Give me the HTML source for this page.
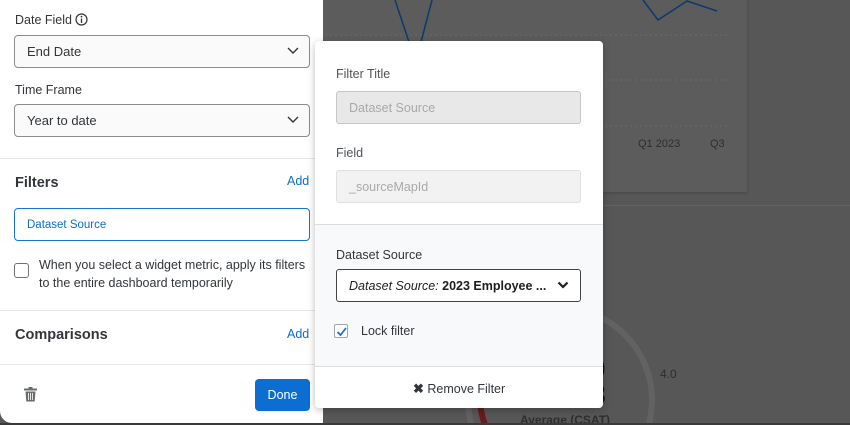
<!DOCTYPE html>
<html><head><style>
*{box-sizing:border-box;margin:0;padding:0}
html,body{width:850px;height:425px;overflow:hidden}
body{background:#575757;font-family:"Liberation Sans",sans-serif;position:relative;color:#32363a}
.a{position:absolute}
.sel{position:absolute;border:1px solid #8a8d90;border-radius:4px;background:#fafafa;font-size:13px;color:#32363a;padding-left:12px;display:flex;align-items:center}
.chev{position:absolute;right:10px;top:50%;margin-top:-5px}
.hr{position:absolute;height:1px;background:#e6e6e6}
.lbl{position:absolute;font-size:12.5px;color:#32363a}
</style></head><body>
<div class="a" style="left:323px;top:0;width:424px;height:192px;background:#5c5c5c;box-shadow:0 1px 3px rgba(0,0,0,.2)"></div>
<div class="a" style="left:323px;top:205px;width:527px;height:1px;background:#626262"></div>
<svg class="a" style="left:0;top:0" width="850" height="425">
<g stroke="#6a6a6a" stroke-dasharray="2 3"><line x1="325" y1="35" x2="730" y2="35"/><line x1="325" y1="80" x2="730" y2="80"/><line x1="325" y1="126" x2="730" y2="126"/></g>
<polyline points="395,0 409,42" fill="none" stroke="#0a3a6e" stroke-width="1.5"/>
<polyline points="432,0 421,42" fill="none" stroke="#0a3a6e" stroke-width="1.5"/>
<polyline points="643,0 658,20 687,1 717,11" fill="none" stroke="#0a3a6e" stroke-width="1.5"/>
<text x="638" y="147" font-size="11" fill="#2e2e2e" font-family="Liberation Sans">Q1 2023</text>
<text x="710" y="147" font-size="11" fill="#2e2e2e" font-family="Liberation Sans">Q3</text>
<circle cx="560" cy="400" r="92" fill="none" stroke="#626262" stroke-width="6"/>
<path d="M595 305 A92 92 0 0 0 485 425" fill="none" stroke="#6a1a1f" stroke-width="6"/>
<text x="590" y="378" font-size="28" font-weight="bold" fill="#111" font-family="Liberation Sans">0</text>
<text x="590" y="404" font-size="28" font-weight="bold" fill="#111" font-family="Liberation Sans">8</text>
<text x="660" y="378" font-size="12" fill="#2e2e2e" font-family="Liberation Sans">4.0</text>
<text x="520" y="424" font-size="12" font-weight="bold" fill="#2e2e2e" font-family="Liberation Sans">Average (CSAT)</text>
<rect x="0" y="423" width="850" height="2" fill="#3a3a3a"/>
</svg>

<div class="a" style="left:0;top:0;width:323px;height:423px;background:#fff;border-bottom-left-radius:12px"></div>
<div class="lbl" style="left:15px;top:13px">Date Field</div>
<svg class="a" style="left:75px;top:13px" width="13" height="13"><circle cx="6.5" cy="6.5" r="5.5" fill="none" stroke="#32363a" stroke-width="1.2"/><line x1="6.5" y1="5.5" x2="6.5" y2="10" stroke="#32363a" stroke-width="1.3"/><circle cx="6.5" cy="3.6" r=".9" fill="#32363a"/></svg>
<div class="sel" style="left:14px;top:35px;width:296px;height:33px">End Date<svg class="chev" width="12" height="8"><polyline points="1,1 6,6 11,1" fill="none" stroke="#32363a" stroke-width="1.4"/></svg></div>
<div class="lbl" style="left:15px;top:83px">Time Frame</div>
<div class="sel" style="left:14px;top:104px;width:296px;height:33px">Year to date<svg class="chev" width="12" height="8"><polyline points="1,1 6,6 11,1" fill="none" stroke="#32363a" stroke-width="1.4"/></svg></div>
<div class="hr" style="left:0;top:158px;width:323px"></div>
<div class="a" style="left:15px;top:175px;font-size:14.5px;font-weight:bold">Filters</div>
<div class="a" style="left:287px;top:174px;font-size:12.5px;color:#0b6ed0">Add</div>
<div class="a" style="left:14px;top:208px;width:296px;height:33px;border:1px solid #1a73d0;border-radius:4px;font-size:11.5px;color:#0b6ed0;padding:10px 0 0 12px">Dataset Source</div>
<div class="a" style="left:14px;top:263px;width:15px;height:15px;border:1px solid #6e7276;border-radius:3px"></div>
<div class="a" style="left:39px;top:256px;font-size:12.5px;line-height:18px;color:#32363a">When you select a widget metric, apply its filters<br>to the entire dashboard temporarily</div>
<div class="hr" style="left:0;top:310px;width:323px"></div>
<div class="a" style="left:15px;top:327px;font-size:14.5px;font-weight:bold">Comparisons</div>
<div class="a" style="left:287px;top:327px;font-size:12.5px;color:#0b6ed0">Add</div>
<div class="hr" style="left:0;top:364px;width:323px"></div>
<svg class="a" style="left:24px;top:387px" width="13" height="15"><rect x="0" y="1.5" width="13" height="2" fill="#6a6d70"/><rect x="4.5" y="0" width="4" height="2" fill="#6a6d70"/><path d="M1.5 4.5h10l-.8 10h-8.4z" fill="#6a6d70"/><g stroke="#fff" stroke-width=".8"><line x1="4.5" y1="6" x2="4.5" y2="13"/><line x1="6.5" y1="6" x2="6.5" y2="13"/><line x1="8.5" y1="6" x2="8.5" y2="13"/></g></svg>
<div class="a" style="left:255px;top:379px;width:55px;height:32px;background:#0b6ed0;border-radius:4px;color:#fff;font-size:12.5px;text-align:center;line-height:32px">Done</div>

<div class="a" style="left:315px;top:41px;width:288px;height:367px;background:#fff;border-radius:4px;box-shadow:0 2px 8px rgba(0,0,0,.25);overflow:hidden">
  <div class="a" style="left:0;top:183px;width:288px;height:143px;background:#f8f9fb;border-top:1px solid #dcdcdc;border-bottom:1px solid #dcdcdc"></div>
</div>
<div class="lbl" style="left:336px;top:67px;color:#505458">Filter Title</div>
<div class="a" style="left:336px;top:91px;width:245px;height:33px;background:#e8e8e8;border:1px solid #c6c6c6;border-radius:3px;font-size:12.5px;color:#a7a9ab;padding:9px 0 0 12px">Dataset Source</div>
<div class="lbl" style="left:336px;top:146px;color:#505458">Field</div>
<div class="a" style="left:336px;top:170px;width:245px;height:33px;background:#f2f2f2;border:1px solid #e0e0e0;border-radius:3px;font-size:12.5px;color:#a7a9ab;padding:9px 0 0 12px">_sourceMapId</div>
<div class="lbl" style="left:336px;top:248px">Dataset Source</div>
<div class="a" style="left:336px;top:269px;width:245px;height:33px;background:#fff;border:1px solid #404448;border-radius:3px;font-size:12.5px;color:#1e1e1e;padding:9px 0 0 12px;white-space:nowrap"><i>Dataset Source:</i> <b>2023 Employee ...</b></div>
<svg class="a" style="left:557px;top:281px" width="12" height="9"><polyline points="1.5,1.5 6,6 10.5,1.5" fill="none" stroke="#1e1e1e" stroke-width="2.2"/></svg>
<div class="a" style="left:334px;top:324px;width:14px;height:14px;border:1px solid #a0a4a8;border-radius:2px;background:#fff"></div>
<svg class="a" style="left:335px;top:325px" width="13" height="13"><polyline points="2.5,7 5.5,10 11,3" fill="none" stroke="#1a73d0" stroke-width="1.8"/></svg>
<div class="lbl" style="left:361px;top:324px">Lock filter</div>
<div class="a" style="left:413px;top:381px;font-size:12.5px;color:#32363a"><b style="font-size:13px">✖</b> Remove Filter</div>
</body></html>
